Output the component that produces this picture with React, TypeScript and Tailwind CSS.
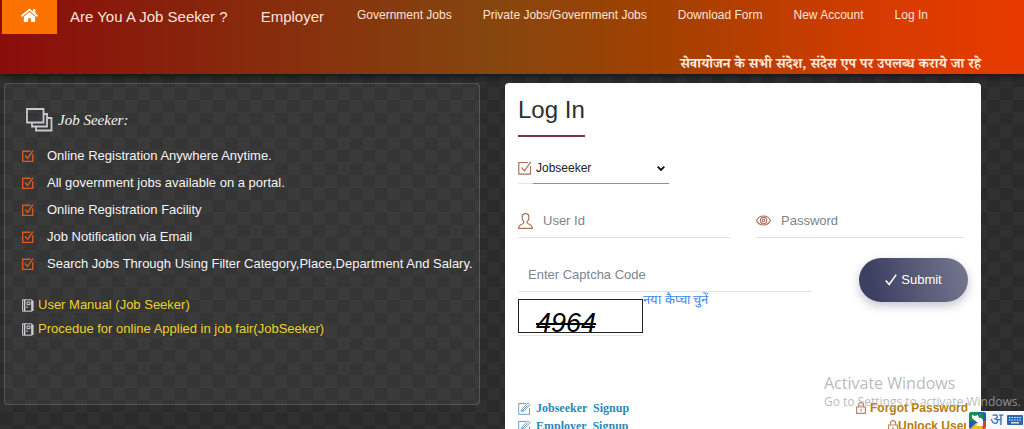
import React from "react";
import { FaHome } from "react-icons/fa";

type IconProps = { className?: string };

function CheckBoxIcon({ className }: IconProps) {
  return (
    <svg viewBox="0 0 14 14" className={className} fill="none" stroke="currentColor" aria-hidden="true">
      <path d="M10 1.5H.8v11.7h11.7V5" />
      <path d="M3.5 6.5l3 3.3L12.8.8" />
    </svg>
  );
}

function StackIcon({ className }: IconProps) {
  return (
    <svg viewBox="0 0 27 24" className={className} fill="none" stroke="currentColor" strokeWidth="1.8" aria-hidden="true">
      <path d="M1 1h16.500v13.500H1z" />
      <path d="M17.500 6H21v12.500H6V15" />
      <path d="M21 10h4.500v12.500H10V19" />
    </svg>
  );
}

function ManualIcon({ className }: IconProps) {
  return (
    <svg viewBox="0 0 12 13" className={className} fill="none" stroke="currentColor" aria-hidden="true">
      <path d="M.6.8h9.200v11.400H.6z" />
      <path d="M2.600 1v11" strokeWidth="1.500" />
      <path d="M10.500 1.500v10.500" strokeWidth="2" />
      <path d="M5 3h3v2.600H5zM5 7.200v1.800" />
    </svg>
  );
}

function UserIcon({ className }: IconProps) {
  return (
    <svg viewBox="0 0 15 16" className={className} fill="none" stroke="currentColor" strokeWidth="1.200" aria-hidden="true">
      <path d="M7.500.6C5.300.6 4.100 2 4.100 4.200c0 1.900.6 3.400 1.700 4.300.2 1.200-.1 1.800-1 2.200C2.600 11.500.8 12.200.6 15.400h13.800c-.2-3.200-2-3.900-4.200-4.700-.9-.4-1.200-1-1-2.200 1.100-.9 1.700-2.400 1.700-4.300C10.900 2 9.700.6 7.500.6z" />
    </svg>
  );
}

function EyeIcon({ className }: IconProps) {
  return (
    <svg viewBox="0 0 16 11" className={className} fill="none" stroke="currentColor" strokeWidth="1.200" aria-hidden="true">
      <path d="M.6 5.500C2 2.300 4.600.7 8 .7s6 1.600 7.400 4.800C14 8.700 11.400 10.300 8 10.300S2 8.700.6 5.500z" />
      <circle cx="8" cy="5.500" r="3.400" />
      <circle cx="8" cy="5.500" r="1.300" />
    </svg>
  );
}

function TickIcon({ className }: IconProps) {
  return (
    <svg viewBox="0 0 12 12" className={className} fill="none" stroke="currentColor" strokeWidth="1.600" aria-hidden="true">
      <path d="M.8 6.500l3.400 4L11.200.6" />
    </svg>
  );
}

function EditIcon({ className }: IconProps) {
  return (
    <svg viewBox="0 0 13 13" className={className} fill="none" stroke="currentColor" aria-hidden="true">
      <path d="M8 1.500H.7v10.800h10.800V6" />
      <path d="M3.300 9.700l.8-3L10 .8l2 2-5.800 6zM4 9l5.500-5.500" />
    </svg>
  );
}

function LockIcon({ className }: IconProps) {
  return (
    <svg viewBox="0 0 10 12" className={className} fill="none" stroke="currentColor" strokeWidth="1.200" aria-hidden="true">
      <path d="M.6 5h8.800v6.400H.6z" />
      <path d="M2.400 5V3.200C2.400 1.600 3.400.6 5 .6s2.600 1 2.600 2.600V5M5 7v2.500" />
    </svg>
  );
}

const mainLinks = ["Are You A Job Seeker ?", "Employer"];
const subLinks = ["Government Jobs", "Private Jobs/Government Jobs", "Download Form", "New Account", "Log In"];
const features = [
  "Online Registration Anywhere Anytime.",
  "All government jobs available on a portal.",
  "Online Registration Facility",
  "Job Notification via Email",
  "Search Jobs Through Using Filter Category,Place,Department And Salary.",
];
const manuals = ["User Manual (Job Seeker)", "Procedue for online Applied in job fair(JobSeeker)"];

function Header() {
  return (
    <header className="relative z-10 bg-[linear-gradient(to_right,#8a0d0a_0%,#85460e_48%,#a44000_66%,#d43b00_85%,#e83a00_100%)] pl-0.5 shadow-[0_2px_8px_rgba(0,0,0,0.6)]">
      <nav className="flex items-start gap-[33px] whitespace-nowrap text-[#fbe3d8]">
        <div className="flex items-start gap-[13px]">
          <a href="#home" aria-label="Home" className="flex h-[34px] w-[55px] items-center justify-center bg-[#fb7200] pb-1 text-white">
            <FaHome className="size-[17px]" />
          </a>
          <a href="#seeker" className="pt-[7px] text-[15px] leading-5">{mainLinks[0]}</a>
        </div>
        <a href="#employer" className="pt-[7px] text-[15px] leading-5">{mainLinks[1]}</a>
        <div className="flex gap-[31px] pt-[7px] text-xs">
          {subLinks.map((label) => (
            <a key={label} href="#link">{label}</a>
          ))}
        </div>
      </nav>
      <p className="h-10 truncate pr-[43px] pt-5 text-right font-['Noto_Serif_Devanagari','Liberation_Serif',serif] text-[14px] font-bold leading-6 text-[#ffeadc]">
        सेवायोजन के सभी संदेश, संदेस एप पर उपलब्ध कराये जा रहे
      </p>
    </header>
  );
}

function SeekerPanel() {
  return (
    <section className="h-[322px] min-w-0 rounded-[4px] border border-white/15 bg-white/5 pl-[17px] pt-6 text-[#f4f4f4]">
      <h2 className="flex items-center gap-[5px] pl-1 font-['Liberation_Serif',serif] text-[15px] italic leading-6">
        <StackIcon className="h-6 w-[27px] text-[#c9c9cd]" />
        Job Seeker:
      </h2>
      <ul className="mt-[10px] text-[13px] leading-[27px]">
        {features.map((text) => (
          <li key={text} className="flex items-center gap-[13px] whitespace-nowrap">
            <CheckBoxIcon className="size-3 shrink-0 stroke-[1.6] text-[#d9591f]" />
            {text}
          </li>
        ))}
      </ul>
      <ul className="mt-4 text-[13px] leading-6 text-[#f0d02c]">
        {manuals.map((text) => (
          <li key={text}>
            <a href="#manual" className="flex items-center gap-1 whitespace-nowrap">
              <ManualIcon className="h-[13px] w-3 shrink-0 text-[#cdd0d6]" />
              {text}
            </a>
          </li>
        ))}
      </ul>
    </section>
  );
}

function LoginCard() {
  return (
    <section className="min-w-0 rounded-[4px] bg-white px-[13px] pb-10 pt-[9px]">
      <h1 className="w-fit border-b-2 border-[#7d3440] pb-[7px] text-2xl leading-9 text-[#2d2f31]">Log In</h1>
      <form onSubmit={(e) => e.preventDefault()}>
        <div className="mt-4 flex h-[31px] w-[151px] items-stretch">
          <label htmlFor="role" className="flex w-[15px] items-center border-b border-[#e6e2e2] text-[#a8735e]">
            <CheckBoxIcon className="size-[14px] stroke-[1.2]" />
            <span className="sr-only">Role</span>
          </label>
          <div className="relative flex-1">
            <select id="role" defaultValue="Jobseeker" className="h-full w-full appearance-none border-b border-[#c08078] bg-transparent pl-[3px] text-xs text-[#222] outline-none">
              <option>Jobseeker</option>
              <option>Employer</option>
            </select>
            <svg viewBox="0 0 8 5" className="pointer-events-none absolute right-1 top-[13px] h-[5px] w-2" fill="none" stroke="#111" strokeWidth="1.800" aria-hidden="true">
              <path d="M.7.7L4 4 7.300.7" />
            </svg>
          </div>
        </div>
        <div className="mt-5 grid grid-cols-[212fr_208fr] gap-[26px] pr-1">
          <div className="flex h-[34px] items-center gap-[10px] border-b border-[#dfe1e4]">
            <label htmlFor="user" className="text-[#a8735e]">
              <UserIcon className="h-4 w-[15px]" />
              <span className="sr-only">User Id</span>
            </label>
            <input id="user" placeholder="User Id" className="h-full min-w-0 flex-1 text-[13px] outline-none placeholder:text-[#7d858d]" />
          </div>
          <div className="flex h-[34px] items-center gap-[10px] border-b border-[#dfe1e4]">
            <label htmlFor="pass" className="text-[#a8735e]">
              <EyeIcon className="h-[11px] w-[15px]" />
              <span className="sr-only">Password</span>
            </label>
            <input id="pass" type="password" placeholder="Password" className="h-full min-w-0 flex-1 text-[13px] outline-none placeholder:text-[#7d858d]" />
          </div>
        </div>
        <div className="mt-5 flex items-start justify-between">
          <div className="w-[65%]">
            <input aria-label="Enter Captcha Code" placeholder="Enter Captcha Code" className="block h-[34px] w-full border-b border-[#dfe1e4] px-[10px] text-[13px] outline-none placeholder:text-[#7d858d]" />
            <div className="flex items-start">
              <div className="mt-[7px] w-[125px] border-b border-[#e4e4e4] pb-0.5">
                <div className="h-[34px] overflow-hidden border border-[#222] pl-[17px] pt-[7px] text-[27px] italic leading-8 text-black line-through">4964</div>
              </div>
              <a href="#captcha" className="whitespace-nowrap text-[13px] leading-4 text-[#3b8af0]">नया कैप्चा चुनें</a>
            </div>
          </div>
          <button type="submit" className="flex h-11 w-[109px] items-center justify-center gap-1 rounded-full bg-[linear-gradient(75deg,#3e4062_15%,#77788f_100%)] text-[13px] text-white shadow-[0_4px_10px_rgba(62,64,98,0.3)]">
            <TickIcon className="size-3" />
            Submit
          </button>
        </div>
      </form>
      <div className="mt-[63px] flex justify-between text-xs font-bold leading-[18px]">
        <div className="font-['Liberation_Serif',serif] text-[#2b88b8]">
          {["Jobseeker", "Employer"].map((role) => (
            <a key={role} href="#signup" className="flex items-center gap-[5px] whitespace-pre">
              <EditIcon className="size-[13px] text-[#6f9fc9]" />
              {role + "  Signup"}
            </a>
          ))}
        </div>
        <div className="flex flex-col items-end text-[#b47d12]">
          <a href="#forgot" className="flex items-center gap-1">
            <LockIcon className="h-3 w-[10px] text-[#b98a62]" />
            Forgot Password
          </a>
          <a href="#unlock" className="flex items-center">
            <LockIcon className="h-3 w-[10px] text-[#b98a62]" />
            Unlock User
          </a>
        </div>
      </div>
    </section>
  );
}

function DesktopOverlay() {
  return (
    <>
      <div className="pointer-events-none absolute bottom-[18px] right-[3px] z-20 w-[197px] whitespace-nowrap font-['Open_Sans','Noto_Sans',sans-serif] text-[#a9a9a9]/80">
        <p className="text-base leading-5">Activate Windows</p>
        <p className="text-xs leading-[18px]">Go to Settings to activate Windows.</p>
      </div>
      <div className="absolute bottom-0 right-0 z-30 flex h-[18px] w-[58px] items-center justify-between bg-[#f8f9fc] pl-[3px] pr-px">
        <svg viewBox="0 0 17 17" className="size-[17px]" aria-hidden="true">
          <path d="M0 2a2 2 0 0 1 2-2h7v9H0z" fill="#15924d" />
          <path d="M9 0h6a2 2 0 0 1 2 2v7H9z" fill="#2459bd" />
          <path d="M9 9h8v6a2 2 0 0 1-2 2H9z" fill="#d9402e" />
          <path d="M0 9h9v8H2a2 2 0 0 1-2-2z" fill="#2459bd" />
          <path d="M1 17l6-6h5l2 6z" fill="#f2bd20" />
          <path d="M3 3l3 1 3-1 1 3 4-1v9H7l2-3-6-5z" fill="#fff" />
          <path d="M7 1l7 7V1z" fill="#15924d" />
        </svg>
        <span className="text-[17px] leading-[18px] text-[#2c7cc4]">अ</span>
        <svg viewBox="0 0 16 10" className="h-[10px] w-4" aria-hidden="true">
          <rect width="16" height="10" rx="1" fill="#2867ad" />
          <path d="M2 2.500h12M2 5h12" stroke="#fff" strokeWidth="1.200" strokeDasharray="1.400 1.200" />
          <path d="M4 7.800h8" stroke="#fff" strokeWidth="1.200" />
        </svg>
      </div>
    </>
  );
}

export default function App() {
  return (
    <div className="relative h-screen overflow-hidden bg-[#2c2c2c] bg-[repeating-conic-gradient(#2b2b2b_0%_25%,#303030_0%_50%)] bg-[length:25px_25px] font-['Liberation_Sans',Arial,sans-serif]">
      <Header />
      <main className="grid grid-cols-2 items-start gap-[25px] pl-1 pr-[43px] pt-[9px]">
        <SeekerPanel />
        <LoginCard />
      </main>
      <DesktopOverlay />
    </div>
  );
}
